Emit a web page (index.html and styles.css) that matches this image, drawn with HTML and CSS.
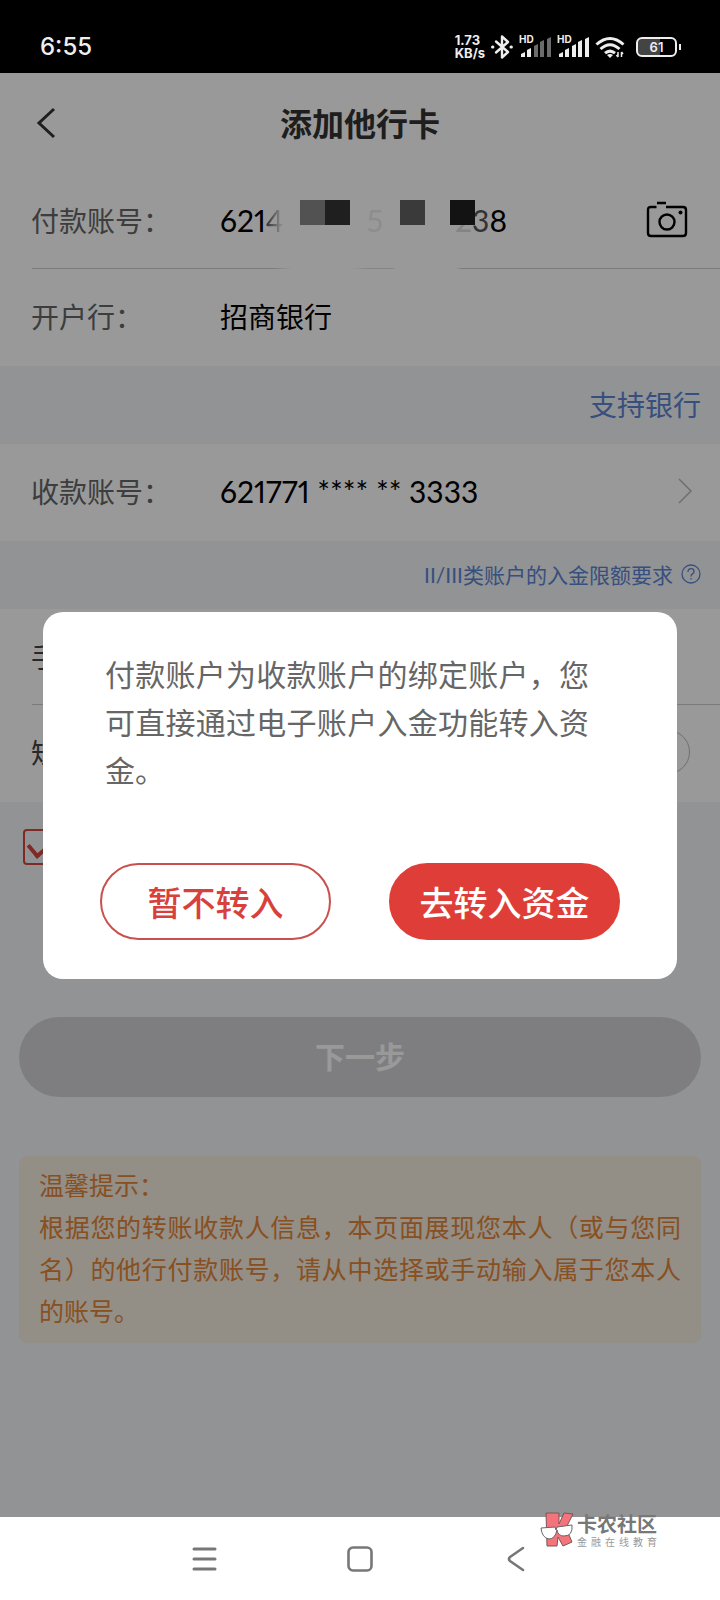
FILE: index.html
```html
<!DOCTYPE html>
<html lang="zh-CN">
<head>
<meta charset="utf-8">
<meta name="viewport" content="width=device-width, initial-scale=1">
<title>添加他行卡</title>
<link rel="stylesheet" href="styles.css">
</head>
<body>
<div class="status-bar">
  <time class="clock">6:55</time>
  <div class="status-icons">
    <span class="speed">1.73<br>KB/s</span>
    <svg class="bluetooth" width="22" height="26" viewBox="0 0 22 26" fill="none" stroke="#eee" stroke-width="2.4" stroke-linejoin="round" stroke-linecap="round"><path d="M5 7.500 17 18 11 23.500V2.500L17 8 5 18.500"/><path d="M1.500 13h.4M20 13h.4" stroke-width="3"/></svg>
    <span class="signal"><b>HD</b>
      <svg width="32" height="22" viewBox="0 0 32 22"><g fill="#eee"><path d="M2 18l4-2v5H2z"/><path d="M8 14l4-2v9H8z"/></g><g fill="#6b6b6b"><path d="M15 10l4-2v13h-4z"/><path d="M21 6l4-2v17h-4z"/><path d="M28 3l4-2v20h-4z"/></g></svg></span>
    <span class="signal"><b>HD</b>
      <svg width="32" height="22" viewBox="0 0 32 22"><g fill="#eee"><path d="M2 18l4-2v5H2z"/><path d="M8 14l4-2v9H8z"/><path d="M15 10l4-2v13h-4z"/><path d="M21 6l4-2v17h-4z"/><path d="M28 3l4-2v20h-4z"/></g></svg></span>
    <svg class="wifi" width="30" height="24" viewBox="0 0 30 24" fill="none" stroke="#eee" stroke-width="3"><path d="M1.500 9.500Q15-2.500 28.500 9.500M5.500 14Q15 5.500 24.500 14M10 18.200Q15 14 20 18.200"/><path d="m12 20 3 3 3-3q-3-2-6 0z" fill="#eee" stroke="none"/><path d="M23 17v5m-1.500-2 1.500 2M26.500 22v-5m1.500 2-1.500-2" stroke-width="1.500"/></svg>
    <span class="battery">61</span>
  </div>
</div>

<div class="app">
  <main class="page">
    <header class="title-bar">
      <button class="back" type="button" aria-label="返回"><svg width="20" height="32" viewBox="0 0 20 32" fill="none" stroke="#333" stroke-width="3"><path d="M18 2 3 16l15 14"/></svg></button>
      <h1>添加他行卡</h1>
    </header>

    <section class="group">
      <div class="row row-payer">
        <span class="label">付款账号：</span>
        <span class="value masked"><span>621</span><span class="fade-out">4</span><span class="ghost">5</span><span class="fade-in">2</span><span class="semi">3</span><span>8</span>
          <i class="block block-a"></i><i class="block block-b"></i><i class="block block-c"></i><i class="block block-d"></i>
        </span>
        <button class="camera" type="button" aria-label="扫描银行卡"><svg width="42" height="38" viewBox="0 0 42 38" fill="none" stroke="#000" stroke-width="2.400"><path d="M10.500 6H5q-3 0-3 3v23q0 3 3 3h32q3 0 3-3V9q0-3-3-3H20M11 2h9"/><circle cx="21" cy="21" r="7.500"/><circle cx="34.500" cy="11.500" r="2" fill="#000" stroke="none"/></svg></button>
      </div>
      <div class="row">
        <span class="label">开户行：</span>
        <span class="value bank">招商银行</span>
      </div>
    </section>

    <div class="link-bar"><a class="banks-link" href="#">支持银行</a></div>

    <section class="group">
      <div class="row">
        <span class="label">收款账号：</span>
        <span class="value">621771 **** ** 3333</span>
        <svg class="chevron" width="14" height="26" viewBox="0 0 14 26" fill="none" stroke="#b8b8b8" stroke-width="1.500"><path d="m1 1 12 12L1 25"/></svg>
      </div>
    </section>

    <div class="link-bar link-bar-small"><a class="limit-link" href="#">II/III类账户的入金限额要求
      <svg width="20" height="20" viewBox="0 0 20 20" fill="none" stroke="currentColor" stroke-width="1.300"><circle cx="10" cy="10" r="9"/><path d="M7 8q0-3.300 3-3.300t3 2.800q0 1.500-1.500 2.400T10 12.500M10 14v1.600"/></svg></a></div>

    <section class="group">
      <div class="row row-line">
        <span class="label dark">手机号</span>
      </div>
      <div class="row">
        <span class="label dark">短信</span>
        <button class="code-button" type="button" aria-label="获取验证码"></button>
      </div>
    </section>

    <div class="agreement"><input class="agree" type="checkbox" checked aria-label="同意协议"></div>

    <button class="next" type="button">下一步</button>

    <section class="tips">
      <h2>温馨提示：</h2>
      <p>根据您的转账收款人信息，本页面展现您本人（或与您同名）的他行付款账号，请从中选择或手动输入属于您本人的账号。</p>
    </section>
  </main>

  <div class="overlay">
    <div class="dialog" role="dialog" aria-modal="true">
      <p class="message">付款账户为收款账户的绑定账户，您可直接通过电子账户入金功能转入资金。</p>
      <div class="actions">
        <button class="action" type="button">暂不转入</button>
        <button class="action primary" type="button">去转入资金</button>
      </div>
    </div>
  </div>
</div>

<nav class="nav-bar">
  <button type="button" aria-label="菜单"><svg width="26" height="26" viewBox="0 0 26 26" stroke="#777" stroke-width="3" stroke-linecap="round"><path d="M3 3h21M3 13h21M3 23h21"/></svg></button>
  <button type="button" aria-label="主页"><svg width="26" height="26" viewBox="0 0 26 26" fill="none" stroke="#777" stroke-width="2.600"><rect x="1.500" y="1.500" width="23" height="23" rx="4.500"/></svg></button>
  <button type="button" aria-label="返回"><svg width="18" height="26" viewBox="0 0 18 26" fill="none" stroke="#777" stroke-width="2.600" stroke-linecap="round" stroke-linejoin="round"><path d="M16 2 3 11q-2 2 0 4l13 9"/></svg></button>
  <div class="watermark">
    <svg width="34" height="36" viewBox="0 0 34 36"><path d="M6 1h13v11l5-11 9 1-7 14 6 14-9 4-5-9-1 9H7z" fill="#f4747c" stroke="#7a5558"/><path d="M1 16l14-1 1 3 1-3 15-2q1 11-8 11-6 0-7-6-2 9-8 9-7-1-8-11z" fill="#fff" stroke="#666"/></svg>
    <div class="watermark-text"><strong>卡农社区</strong><span>金融在线教育</span></div>
  </div>
</nav>
</body>
</html>
```
FILE: styles.css
```css
* { box-sizing: border-box; }
body {
  margin: 0;
  min-height: 100vh;
  display: flex;
  flex-direction: column;
  background: #fff;
  font-family: Lato, "Noto Sans CJK SC", sans-serif;
  font-variant-numeric: proportional-nums;
}
button { padding: 0; border: 0; background: none; font: inherit; color: inherit; }
svg { display: block; flex: none; }
h1, h2, p { margin: 0; }
a { text-decoration: none; }

.status-bar {
  display: flex;
  align-items: center;
  justify-content: space-between;
  height: 73px;
  padding: 20px 38px 0 40px;
  background: #000;
  color: #eee;
}
.clock { font: 500 24px Inter, sans-serif; }
.status-icons { display: flex; align-items: center; gap: 6px; }
.speed { font: 700 13px/13px Inter, sans-serif; }
.signal { position: relative; }
.signal b { position: absolute; left: 0; top: -3px; font: 700 10px/12px Inter, sans-serif; }
.battery {
  position: relative;
  width: 41px;
  height: 20px;
  margin: 0 5px;
  border: 2px solid #eee;
  border-radius: 6px;
  background: linear-gradient(90deg, #444 60%, #000 60%);
  font: 600 13px/16px Inter, sans-serif;
  text-align: center;
}
.battery::after {
  content: "";
  position: absolute;
  right: -6px;
  top: 5px;
  width: 2px;
  height: 6px;
  background: #eee;
}

.app { position: relative; flex: 1; background: #f2f5f8; }
.title-bar {
  position: relative;
  display: flex;
  align-items: center;
  justify-content: center;
  height: 100px;
  padding-bottom: 3px;
  background: #fff;
  color: #333;
}
.title-bar h1 { font-size: 32px; font-weight: 700; }
.back { position: absolute; left: 36px; top: 34px; }
.group { padding-bottom: 1px; background: #fff; }
.row {
  position: relative;
  display: flex;
  align-items: center;
  height: 96px;
  padding: 0 28px 2px 31px;
  font-size: 28px;
}
.label { width: 189px; color: #666; }
.dark { color: #444; }
.value { font-size: 30px; color: #000; }
.bank { font-size: 28px; }
.row-payer::after, .row-line::after {
  content: "";
  position: absolute;
  left: 32px;
  right: 0;
  bottom: 0;
  height: 1px;
  background: #ccc;
}
.row-payer::after {
  background: linear-gradient(90deg, #ccc 240px, #fff 260px, #fff 320px, #ddd 336px, #ddd 360px, #fff 364px, #fff 424px, #ccc 430px);
}
.masked { position: relative; display: flex; width: 287px; }
.fade-out { margin-right: auto; color: transparent; background: linear-gradient(90deg, #555, #fff); background-clip: text; }
.ghost { margin-right: 72px; color: #ebebeb; }
.fade-in { color: #ddd; }
.semi { color: #555; }
.block { position: absolute; top: -2px; width: 25px; height: 25px; }
.block-a { left: 80px; background: #898989; }
.block-b { left: 105px; background: #343434; }
.block-c { left: 180px; background: #616161; }
.block-d { left: 230px; background: #212121; }
.camera, .chevron, .code-button { margin-left: auto; }
.camera { margin-right: 4px; }
.link-bar {
  display: flex;
  align-items: center;
  justify-content: flex-end;
  height: 78px;
  padding: 0 19px 3px;
}
.link-bar-small { height: 68px; }
.banks-link { font-size: 28px; color: #5d84d2; }
.limit-link { display: flex; align-items: center; gap: 8px; font-size: 21px; color: #5d84d2; }
.code-button { width: 170px; height: 44px; margin-right: 2px; border: 1px solid #bbb; border-radius: 22px; }

.agreement { padding: 27px 23px; }
.agree {
  appearance: none;
  display: block;
  position: relative;
  width: 36px;
  height: 36px;
  margin: 0;
  border: 2px solid #d6453f;
  border-radius: 4px;
}
.agree::after {
  content: "";
  position: absolute;
  left: 8px;
  top: 2px;
  width: 12px;
  height: 20px;
  border: solid #d6453f;
  border-width: 0 4px 4px 0;
  rotate: 50deg;
}
.next {
  display: block;
  width: calc(100% - 38px);
  height: 80px;
  margin: 125px 19px 59px;
  padding-bottom: 4px;
  border-radius: 40px;
  background: #d2d3d8;
  color: #fff;
  font-size: 30px;
  font-weight: 700;
}
.tips {
  margin: 0 19px;
  padding: 8px 20px 11px;
  border-radius: 8px;
  background: #f5ede0;
  color: #e38538;
  font-size: 25px;
  line-height: 42px;
}
.tips h2 { font-size: 25px; font-weight: 400; }
.tips p { text-align: justify; }

.overlay {
  position: absolute;
  inset: 0;
  display: grid;
  place-items: center;
  padding: 1px 43px 0;
  background: rgba(0, 0, 0, 0.4);
}
.dialog {
  width: 100%;
  padding: 38px 57px 39px;
  border-radius: 20px;
  background: #fff;
}
.message {
  padding: 0 31px 0 5px;
  font-size: 30px;
  line-height: 48px;
  color: #666;
  text-align: justify;
}
.actions { display: grid; grid-template-columns: 1fr 1fr; gap: 58px; margin-top: 69px; }
.action {
  height: 77px;
  border: 2px solid #c9504d;
  border-radius: 39px;
  color: #d8413b;
  font-size: 34px;
  font-weight: 500;
}
.primary { border-color: #df3e38; background: #df3e38; color: #fff; }

.nav-bar {
  position: relative;
  display: grid;
  grid-template-columns: repeat(3, 1fr);
  align-items: center;
  justify-items: center;
  height: 83px;
  padding: 0 17.5%;
  background: #fff;
}
.watermark { position: absolute; left: 75%; top: -5px; display: flex; gap: 3px; }
.watermark-text { display: flex; flex-direction: column; color: #777; }
.watermark-text strong { font-size: 20px; line-height: 24px; }
.watermark-text span { font-size: 10px; line-height: 12px; text-align-last: justify; color: #999; }
```
